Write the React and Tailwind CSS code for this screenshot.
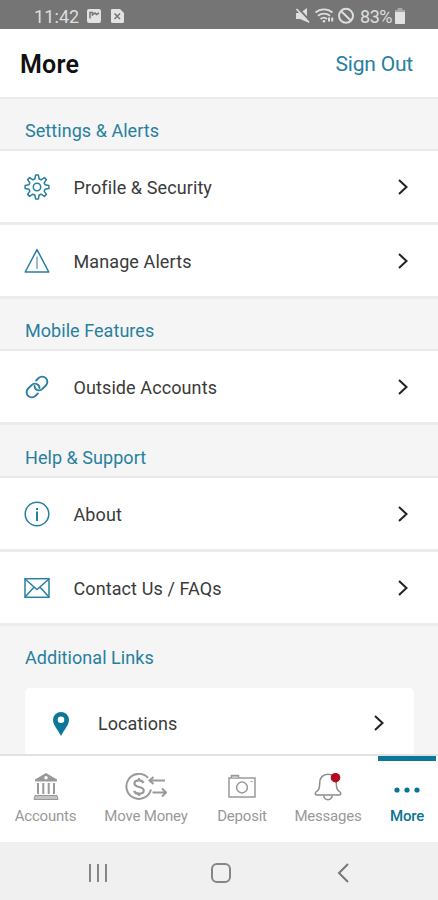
import React from 'react';

const GearIcon = () => (
  <svg width="26" height="26" viewBox="-13 -13 26 26" fill="none" stroke="#27809f" strokeWidth="1.5" strokeLinejoin="round">
    <path d="M-1.4-11.9H1.4L2.2-8 4.1-7.2 7.4-9.4 9.400-7.4 7.2-4.1 8-2.2 11.9-1.4V1.4L8 2.2 7.2 4.1 9.4 7.4 7.4 9.4 4.1 7.2 2.2 8 1.4 11.9H-1.4L-2.2 8-4.1 7.2-7.4 9.4-9.4 7.4-7.2 4.1-8 2.2-11.9 1.4V-1.4L-8-2.2-7.2-4.1-9.4-7.4-7.4-9.4-4.1-7.2-2.2-8Z" />
    <circle r="3.7" />
  </svg>
);

const AlertIcon = () => (
  <svg width="26" height="26" viewBox="0 0 26 26" fill="none" stroke="#27809f" strokeWidth="1.5" strokeLinejoin="round">
    <path d="M13 1.6 24.8 24H1.2Z" />
    <path d="M13 8.500v12.500" stroke="#7fa5b6" />
  </svg>
);

const LinkIcon = () => (
  <svg width="26" height="26" viewBox="-13 -13 26 26" fill="none" stroke="#27809f" strokeWidth="1.9" strokeLinecap="round">
    <g transform="rotate(-45)">
      <path d="M-4 5.200H-7.300A5.200 5.200 0 0 1-7.300-5.200H-2.500A5 5 0 0 1 2.300-.5 4 4 0 0 1 1 2.500" />
      <path d="M4-5.200H7.300A5.200 5.200 0 0 1 7.300 5.200H2.500A5 5 0 0 1-2.300.5 4 4 0 0 1-1-2.500" />
    </g>
  </svg>
);

const InfoIcon = () => (
  <svg width="26" height="26" viewBox="0 0 26 26" fill="none" stroke="#27809f" strokeWidth="1.5">
    <circle cx="13" cy="13" r="11.8" />
    <path d="M13 10.500V20M13 7v2" strokeWidth="2" />
  </svg>
);

const MailIcon = () => (
  <svg width="26" height="26" viewBox="0 0 26 26" fill="none" stroke="#27809f" strokeWidth="1.5">
    <rect x="1" y="3.7" width="24" height="18.6" />
    <path d="M1 4l12 10.500L25 4M1 22l9-9.700M25 22l-9-9.700" />
  </svg>
);

const PinIcon = () => (
  <svg width="18" height="26" viewBox="0 0 18 26" fill="#0b7898">
    <path fillRule="evenodd" d="M9 1a8 8 0 0 0-8 8c0 5 4.800 9.500 8 16 3.200-6.500 8-11 8-16a8 8 0 0 0-8-8Zm0 4.500a3.300 3.300 0 1 1 0 6.600 3.300 3.300 0 0 1 0-6.600Z" />
  </svg>
);

const Chevron = () => (
  <svg width="12" height="18" viewBox="0 0 12 18" fill="none" stroke="#222" strokeWidth="2">
    <path d="M2 2l7.500 7L2 16" />
  </svg>
);

const BankIcon = () => (
  <svg width="26" height="28" viewBox="0 0 26 28" fill="#999">
    <path fillRule="evenodd" d="M13 0 24 6.500v2H2v-2Zm0 3a1.800 1.800 0 1 0 0 3.600A1.800 1.800 0 0 0 13 3Z" />
    <path d="M4 10h2v11H4zM9.300 10h2v11h-2zM14.700 10h2v11h-2zM20 10h2v11h-2z" />
    <path d="M2 22.500h22l1 4H1z" fill="#c4c4c4" stroke="#999" strokeWidth="1" />
  </svg>
);

const MoveMoneyIcon = () => (
  <svg width="42" height="28" viewBox="0 0 42 28" fill="none" stroke="#999" strokeWidth="2">
    <path d="M23 4.800A12.500 12.500 0 1 0 26 16.500" />
    <path d="M18.500 10C17.800 8.200 16 7.300 14 7.300c-2.600 0-4.500 1.200-4.500 3.200 0 4.600 9.200 2.300 9.200 6.900 0 2.100-2.200 3.300-4.700 3.300-2.400 0-4.300-1-4.900-2.900M14 5V7.300M14 20.700V23" strokeWidth="2.200" />
    <path d="M40 7.500H24.500M28.500 4l-4 3.500 4 3.500M27.500 19.500h13M37 15.500l4.200 4-4.200 4" />
  </svg>
);

const CameraIcon = () => (
  <svg width="28" height="28" viewBox="0 0 28 28" fill="none" stroke="#999" strokeWidth="1.500">
    <rect x="1" y="5" width="26" height="19" />
    <path d="M3.500 5V2.500h7V5" fill="#ccc" />
    <circle cx="14" cy="14.500" r="5.400" />
    <path d="M22.500 8.500h2" strokeWidth="1" />
  </svg>
);

const BellIcon = () => (
  <svg width="28" height="28" viewBox="0 0 28 28" fill="none" stroke="#8c8c8c" strokeWidth="1.500">
    <path d="M14 1.200c-5 0-8.300 3.600-8.300 8.500 0 5.500-.7 7.300-3.700 9.300-1.300.9-.9 3 .6 3h22.800c1.500 0 1.900-2.100.6-3-3-2-3.700-3.800-3.700-9.300 0-4.900-3.300-8.500-8.300-8.500Z" />
    <path d="M9.800 22.500a4.200 4.200 0 0 0 8.400 0" />
    <circle cx="21.500" cy="4.700" r="4.800" fill="#b40a20" stroke="none" />
  </svg>
);

const DotsIcon = () => (
  <svg width="28" height="28" viewBox="0 0 28 28" fill="#0b7393">
    <circle cx="4" cy="17" r="2.600" />
    <circle cx="14" cy="17" r="2.600" />
    <circle cx="24" cy="17" r="2.600" />
  </svg>
);

const StatusBar = () => (
  <div className="flex h-[29px] shrink-0 items-center bg-[#757575] pt-[3px] pl-[34px] pr-[33px] text-[18px] text-[#dedede]">
    <span className="w-[52px] tracking-[0.1px]">11:42</span>
    <svg width="40" height="16" viewBox="0 0 40 16" fill="#e2e2e2">
      <rect x="1" y="1" width="14" height="14" rx="2" />
      <path d="M4 10.500V4.500h2.500V7l2.500-2 1.500 1.500L13 5" fill="none" stroke="#757575" strokeWidth="1.500" />
      <path d="M26 1h8l4 4v8.500a1.500 1.500 0 0 1-1.500 1.500H26.500A1.500 1.500 0 0 1 25 13.500V2a1 1 0 0 1 1-1Z" />
      <path d="m28.500 5.500 5.500 5.500m0-5.500L28.500 11" stroke="#757575" strokeWidth="1.500" />
    </svg>
    <svg className="ml-auto" width="60" height="18" viewBox="0 0 60 18" fill="none" stroke="#dedede" strokeWidth="1.800">
      <path d="M1 6h4l7-5v14L5 12H1Z" fill="#dedede" stroke="none" />
      <path d="M2.500 0.500 15 14" stroke="#757575" strokeWidth="2" />
      <path d="m1.500 2 12.500 13.500" />
      <path d="M20.500 5.500c5-4.300 12-4.300 17 0M23 8.800c3.500-3 8.500-3 12 0M25.500 12c2-1.700 4.500-1.700 6.500 0" />
      <circle cx="29" cy="14.300" r="1.300" fill="#dedede" stroke="none" />
      <path d="M34 10.500v4M37.200 10.500v4" strokeWidth="2" />
      <circle cx="51" cy="8.800" r="7" strokeWidth="2" />
      <path d="m46 4 10 9.700" strokeWidth="2" />
    </svg>
    <span className="ml-[3px] mr-px w-[36px] text-center tracking-[-0.5px]">83%</span>
    <svg width="10" height="16" viewBox="0 0 11 16" preserveAspectRatio="none" fill="#e2e2e2">
      <path d="M3 0h5v2h3v13a1 1 0 0 1-1 1H1a1 1 0 0 1-1-1V2h3z" fill="#a8a8a8" />
      <path d="M0 4h11v11a1 1 0 0 1-1 1H1a1 1 0 0 1-1-1z" />
    </svg>
  </div>
);

const SectionTitle = ({ children, className = 'h-[50px] pt-[20px]' }) => (
  <h2 className={`shrink-0 pl-[25px] text-[18px] leading-[24px] tracking-[0.05px] text-[#27809f] ${className}`}>{children}</h2>
);

const Row = ({ icon, label }) => (
  <div className="flex h-[74px] items-center border-b-[3px] border-[#ececec] pr-[29px] pl-6">
    <span className="w-[49.500px]">{icon}</span>
    <span className="flex-1 pt-px text-[18px] tracking-[0.1px] text-[#3a3a3a]">{label}</span>
    <Chevron />
  </div>
);

const Group = ({ children }) => (
  <div className="shrink-0 border-t-2 border-[#e9e9e9] bg-white">{children}</div>
);

const Tab = ({ icon, label, className }) => (
  <div className={`flex flex-col items-center pt-[17px] text-[15px] tracking-[-0.2px] whitespace-nowrap ${className}`}>
    {icon}
    <span className="mt-[5px] leading-5">{label}</span>
  </div>
);

const App = () => {
  return (
    <div className="flex h-[900px] w-[438px] flex-col overflow-hidden bg-[#f5f5f5] font-['Roboto',sans-serif]">
      <StatusBar />
      <header className="flex h-[70px] shrink-0 items-center justify-between border-b-2 border-[#ebebeb] bg-white pt-[4px] pr-[25px] pl-[20px]">
        <h1 className="text-[25px] font-semibold tracking-[0.2px] text-[#111]">More</h1>
        <a className="text-[21px] tracking-[-0.2px] text-[#27809f]">Sign Out</a>
      </header>

      <main className="flex h-[655px] shrink-0 flex-col overflow-hidden">
        <SectionTitle>Settings &amp; Alerts</SectionTitle>
        <Group>
          <Row icon={<GearIcon />} label="Profile & Security" />
          <Row icon={<AlertIcon />} label="Manage Alerts" />
        </Group>
        <SectionTitle>Mobile Features</SectionTitle>
        <Group>
          <Row icon={<LinkIcon />} label="Outside Accounts" />
        </Group>
        <SectionTitle className="h-[51px] pt-[21px]">Help &amp; Support</SectionTitle>
        <Group>
          <Row icon={<InfoIcon />} label="About" />
          <Row icon={<MailIcon />} label="Contact Us / FAQs" />
        </Group>
        <SectionTitle>Additional Links</SectionTitle>
        <div className="mr-[24px] ml-[25px] mt-[12px] flex h-[80px] shrink-0 items-start rounded-t-[5px] bg-white pt-[23px] pr-[29px] pl-[27px]">
          <PinIcon />
          <span className="ml-[28px] flex-1 pt-px text-[18px] leading-6 tracking-[0.05px] text-[#3a3a3a]">Locations</span>
          <span className="pt-[3px]"><Chevron /></span>
        </div>
      </main>

      <nav className="flex h-[88px] shrink-0 border-t-2 border-[#e2e2e2] bg-white">
        <Tab className="w-[91px] text-[#999]" icon={<BankIcon />} label="Accounts" />
        <Tab className="w-[110px] text-[#999]" icon={<MoveMoneyIcon />} label="Move Money" />
        <Tab className="w-[82px] text-[#999]" icon={<CameraIcon />} label="Deposit" />
        <Tab className="w-[90px] text-[#999]" icon={<BellIcon />} label="Messages" />
        <div className="ml-[5px] w-[58px] border-t-[5px] border-[#0b7898]">
          <Tab className="-mt-[5px] font-medium text-[#0b7393]" icon={<DotsIcon />} label="More" />
        </div>
      </nav>

      <div className="flex h-[58px] shrink-0 items-center justify-between bg-[#f0f0f0] pt-[3px] pr-[88px] pl-[88px]">
        <svg width="20" height="20" viewBox="0 0 20 20" stroke="#858585" strokeWidth="2">
          <path d="M2 1v18M10 1v18M18 1v18" />
        </svg>
        <svg className="-ml-[2px]" width="22" height="22" viewBox="0 0 22 22" fill="none" stroke="#858585" strokeWidth="2">
          <rect x="2" y="2" width="18" height="18" rx="5" />
        </svg>
        <svg width="14" height="20" viewBox="0 0 14 20" fill="none" stroke="#777" strokeWidth="2">
          <path d="M12 1 3 10l9 9" />
        </svg>
      </div>
    </div>
  );
};

export default App;
